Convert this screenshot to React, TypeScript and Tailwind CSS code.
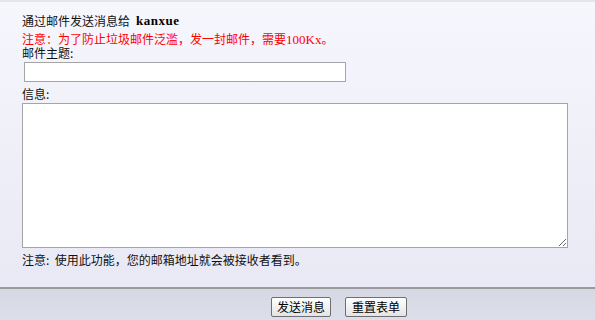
import React from "react";

const cjk = { fontFamily: '"Noto Sans CJK SC", "Liberation Sans", sans-serif' };
const serif = { fontFamily: '"Liberation Serif", "Noto Sans CJK SC", serif' };

export default function App() {
  return (
    <div
      className="w-[595px] h-[320px] flex flex-col text-[12px] text-[#111] overflow-hidden"
      style={cjk}
    >
      <div className="h-[2px] bg-[#e6e6ea]" />
      <div className="flex-1 flex flex-col pl-[22px] bg-gradient-to-b from-[#f6f6fd] to-[#e9e9f5]">
        <div className="mt-[12px] h-[14px] leading-[14px] flex items-center">
          <span>通过邮件发送消息给</span>
          <span className="ml-[6px] font-bold text-[13px] text-black tracking-[0.5px]" style={serif}>
            kanxue
          </span>
        </div>
        <div className="mt-[4px] h-[14px] leading-[14px] text-[#ff0000]">
          注意：为了防止垃圾邮件泛滥，发一封邮件，需要<span className="text-[13px] leading-[14px]" style={serif}>100Kx</span>。
        </div>
        <div className="h-[14px] leading-[14px]">邮件主题:</div>
        <input
          type="text"
          className="mt-[2px] ml-[2px] w-[322px] h-[20px] bg-white border border-[#a5a5a8] outline-none"
        />
        <div className="mt-[5px] h-[14px] leading-[14px]">信息:</div>
        <textarea className="mt-[2px] w-[546px] h-[145px] bg-white border border-[#a5a5a8] outline-none resize" />
        <div className="mt-[5px] h-[14px] leading-[14px]">注意:&nbsp; 使用此功能，您的邮箱地址就会被接收者看到。</div>
      </div>
      <div className="h-[2px] bg-[#9a9a9e]" />
      <div className="h-[31px] bg-gradient-to-b from-[#d6d8e4] to-[#dcdee9] flex items-start justify-start pt-[8px] pl-[271px] gap-[14px]">
        <button
          className="h-[20px] w-[60px] border border-[#6f6f72] rounded-[2px] bg-gradient-to-b from-[#ffffff] to-[#e4e4e6] text-[12px] leading-[18px] text-black"
          style={cjk}
        >
          发送消息
        </button>
        <button
          className="h-[20px] w-[62px] border border-[#6f6f72] rounded-[2px] bg-gradient-to-b from-[#ffffff] to-[#e4e4e6] text-[12px] leading-[18px] text-black"
          style={cjk}
        >
          重置表单
        </button>
      </div>
    </div>
  );
}
